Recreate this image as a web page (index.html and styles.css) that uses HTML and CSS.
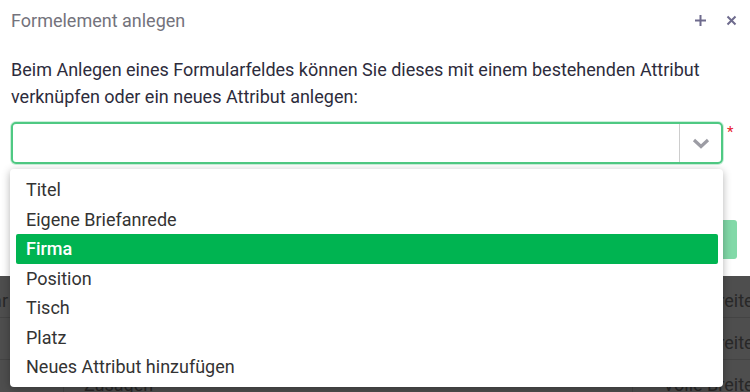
FILE: index.html
```html
<!DOCTYPE html>
<html lang="de">
  <head>
    <meta charset="UTF-8" />
    <meta name="viewport" content="width=device-width, initial-scale=1.0" />
    <title>Formelement anlegen</title>
    <link rel="stylesheet" href="styles.css">
  </head>
  <body>
    <!-- Dialog -->
    <div class="modal">
      <div class="modal-head">
        <span class="modal-title">Formelement anlegen</span>
        <div class="modal-tools">
          <svg class="tool" width="13" height="13" viewBox="0 0 13 13">
            <path d="M6.5 1v11M1 6.5h11" />
          </svg>
          <svg class="tool" width="11" height="11" viewBox="0 0 11 11">
            <path d="M1.5 1.5l8 8M9.5 1.5l-8 8" />
          </svg>
        </div>
      </div>

      <div class="modal-body">
        <p class="intro">
          Beim Anlegen eines Formularfeldes können Sie dieses mit einem bestehenden Attribut<br />
          verknüpfen oder ein neues Attribut anlegen:
        </p>

        <div class="field">
          <div class="select">
            <div class="select-value"></div>
            <div class="select-arrow">
              <svg width="18" height="11" viewBox="0 0 18 11">
                <path d="M2 2l7 6.5L16 2" />
              </svg>
            </div>
          </div>
          <span class="required">*</span>

          <!-- offene Auswahlliste -->
          <ul class="options">
            <li class="option">Titel</li>
            <li class="option">Eigene Briefanrede</li>
            <li class="option active">Firma</li>
            <li class="option">Position</li>
            <li class="option">Tisch</li>
            <li class="option">Platz</li>
            <li class="option">Neues Attribut hinzufügen</li>
          </ul>
        </div>
      </div>

      <div class="modal-foot">
        <button class="btn-save" type="button">Anlegen</button>
      </div>
    </div>

    <!-- Tabelle hinter dem Overlay -->
    <div class="list">
      <div class="row">
        <div class="cell cell-first">Formular</div>
        <div class="cell cell-name">Anrede</div>
        <div class="cell cell-width">Volle Breite</div>
      </div>
      <div class="row">
        <div class="cell cell-first"></div>
        <div class="cell cell-name">Vorname</div>
        <div class="cell cell-width">Volle Breite</div>
      </div>
      <div class="row">
        <div class="cell cell-first"></div>
        <div class="cell cell-name">Zusagen</div>
        <div class="cell cell-width">Volle Breite</div>
      </div>
    </div>
  </body>
</html>
```

FILE: styles.css
```css
* {
  box-sizing: border-box;
}

body {
  margin: 0;
  font-family: Roboto, "Liberation Sans", sans-serif;
  background-color: #4e4e4e;
  overflow: hidden;
}

/* Dialog */
.modal {
  background-color: #fff;
  height: 276px;
}

.modal-head {
  height: 40px;
  display: flex;
  align-items: center;
  justify-content: space-between;
  padding: 0 13px 0 11px;
}

.modal-title {
  font-size: 18px;
  color: #74737c;
}

.modal-tools {
  display: flex;
  align-items: center;
  gap: 19px;
}

.tool path {
  fill: none;
  stroke: #6e6b8d;
  stroke-width: 2;
}

.modal-body {
  padding: 16px 0 0 11px;
}

.intro {
  margin: 0;
  font-size: 18px;
  line-height: 27px;
  color: #2d2c3c;
}

.field {
  position: relative;
  display: flex;
  align-items: flex-start;
  margin-top: 12px;
}

.select {
  width: 712px;
  height: 42px;
  display: flex;
  border: 2px solid #4fc983;
  border-radius: 5px;
  box-shadow: 0 0 0 1px rgba(79, 201, 131, 0.3);
  background-color: #fff;
}

.select-value {
  flex: 1;
}

.select-arrow {
  width: 42px;
  display: flex;
  align-items: center;
  justify-content: center;
  border-left: 1px solid #cdcdcd;
}

.select-arrow path {
  fill: none;
  stroke: #9c9ca4;
  stroke-width: 3.2;
}

.required {
  color: #e8202c;
  font-size: 15px;
  line-height: 1;
  margin: 3px 0 0 4px;
}

/* Auswahlliste */
.options {
  position: absolute;
  top: 47px;
  left: -1px;
  width: 713px;
  margin: 0;
  padding: 6px 5px 5px 6px;
  list-style: none;
  background-color: #fff;
  border-radius: 4px;
  box-shadow: 0 2px 8px rgba(0, 0, 0, 0.3);
  z-index: 2;
}

.option {
  height: 29.5px;
  line-height: 29.5px;
  padding-left: 10px;
  font-size: 18px;
  color: #333;
}

.option.active {
  background-color: #00b451;
  color: #fff;
  font-weight: 500;
  border-radius: 2px;
}

.modal-foot {
  display: flex;
  justify-content: flex-end;
  padding-right: 13px;
  margin-top: 56px;
}

.btn-save {
  height: 39px;
  padding: 0 24px;
  border: none;
  border-radius: 3px;
  background-color: #82d9a8;
  color: #fff;
  font-family: inherit;
  font-size: 18px;
}

/* Tabelle (abgedunkelt) */
.row {
  display: grid;
  grid-template-columns: 63px 1fr 118px;
  height: 42px;
  border-bottom: 1px solid #444;
}

.cell {
  display: flex;
  align-items: center;
  padding-top: 8px;
  font-size: 18px;
  color: #282828;
  overflow: hidden;
  white-space: nowrap;
}

.cell-first {
  justify-content: flex-end;
  padding-right: 55px;
}

.cell-name {
  padding-left: 20px;
  border-left: 1px solid #444;
}

.cell-width {
  padding-left: 30px;
  border-left: 1px solid #444;
}
```
